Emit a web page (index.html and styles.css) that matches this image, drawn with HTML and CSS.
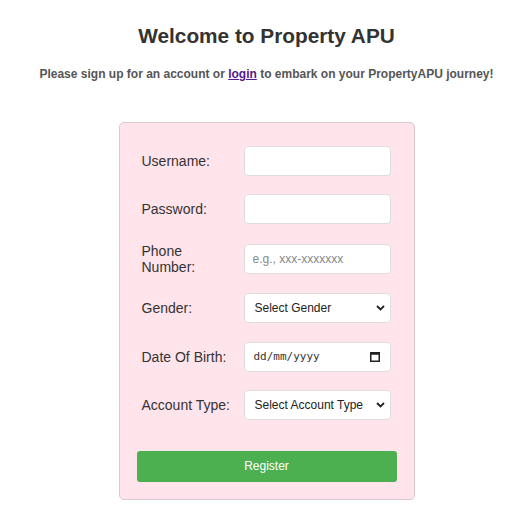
FILE: index.html
```html
<!DOCTYPE html>
<html lang="en">
<head>
<meta charset="utf-8">
<title>Sign Up - Property APU</title>
<link rel="stylesheet" href="styles.css">
</head>
<body>
<main class="page">
  <h1 class="title">Welcome to Property APU</h1>
  <p class="subtitle">Please sign up for an account or <a href="#" class="link">login</a> to embark on your PropertyAPU journey!</p>
  <form class="card">
    <div class="rows">
      <label class="label" for="username">Username:</label>
      <input class="field" type="text" id="username">
      <label class="label" for="password">Password:</label>
      <input class="field" type="password" id="password">
      <label class="label" for="phone">Phone Number:</label>
      <input class="field" type="tel" id="phone" placeholder="e.g., xxx-xxxxxxx">
      <label class="label" for="gender">Gender:</label>
      <div class="select-wrap">
        <select class="field select" id="gender"><option>Select Gender</option></select>
        <svg class="chev" width="9" height="6" viewBox="0 0 9 6"><path d="M1 1 L4.5 4.5 L8 1" fill="none" stroke="#222" stroke-width="1.8"/></svg>
      </div>
      <label class="label" for="dob">Date Of Birth:</label>
      <div class="field date">
        <input class="date-input" type="text" id="dob" placeholder="dd/mm/yyyy">
        <svg class="cal" width="10" height="11" viewBox="0 0 10 11"><rect x="0.75" y="1.75" width="8.5" height="8.5" fill="none" stroke="#222" stroke-width="1.5"/><rect x="0.75" y="1.75" width="8.5" height="2" fill="#222"/></svg>
      </div>
      <label class="label" for="acct">Account Type:</label>
      <div class="select-wrap">
        <select class="field select" id="acct"><option>Select Account Type</option></select>
        <svg class="chev" width="9" height="6" viewBox="0 0 9 6"><path d="M1 1 L4.5 4.5 L8 1" fill="none" stroke="#222" stroke-width="1.8"/></svg>
      </div>
    </div>
    <button type="button" class="btn">Register</button>
  </form>
</main>
</body>
</html>
```
FILE: styles.css
```css
html, body { margin: 0; padding: 0; background: #fff; }
body { padding: 8px 0 8px 8px; font-family: "Liberation Sans", Arial, sans-serif; color: #333; }
.page { display: flex; flex-direction: column; align-items: center; }
.title { font-size: 20.8px; font-weight: bold; margin: 16px 0 0; line-height: 24px; color: #333; }
.subtitle { font-size: 12px; font-weight: bold; color: #555; margin: 19px 0 0; line-height: 14px; }
.link { color: #551a8b; }
.card {
  margin-top: 41px;
  width: 260px;
  padding: 17px;
  background: #ffe4ec;
  border: 1px solid #d9c8cd;
  border-radius: 5px;
  display: flex; flex-direction: column;
}
.rows {
  display: grid;
  grid-template-columns: 93px 147px;
  column-gap: 9px;
  row-gap: 18.4px;
  align-items: center;
  padding: 6px 5px 0;
}
.label { font-size: 14px; line-height: 16px; color: #333; }
.field {
  box-sizing: border-box;
  width: 147px; height: 30px;
  border: 1px solid #ddd; border-radius: 4px;
  background: #fff;
  padding: 0 8px;
  font-family: "Liberation Sans", Arial, sans-serif;
  font-size: 12px; color: #222;
  outline: none;
}
.field::placeholder { color: #888; }
.select-wrap { position: relative; width: 147px; height: 30px; }
.select { appearance: none; -webkit-appearance: none; padding: 0 10px; color: #222; }
.chev { position: absolute; right: 6px; top: 12px; pointer-events: none; }
.date { display: flex; align-items: center; padding: 0 10px 0 9px; }
.date-input {
  flex: 1; min-width: 0; border: none; outline: none; background: transparent; padding: 0;
  font-family: "DejaVu Sans Mono", monospace; font-size: 11px; color: #333;
}
.date-input::placeholder { color: #333; }
.cal { flex: none; }
.btn {
  margin-top: 31px;
  height: 31px;
  border: none; border-radius: 3px;
  background: #4caf50; color: #fff;
  font-family: "Liberation Sans", Arial, sans-serif; font-size: 12px;
}
```
